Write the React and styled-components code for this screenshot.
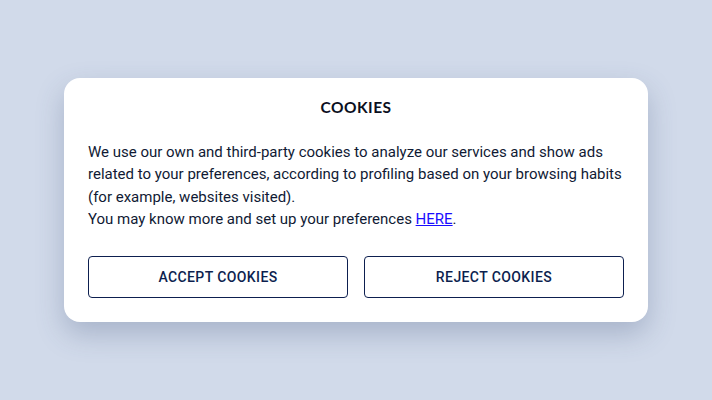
import React from 'react'
import styled, { createGlobalStyle } from 'styled-components'

const GlobalStyle = createGlobalStyle`
  html, body {
    margin: 0;
    padding: 0;
    background: #d1daea;
  }
  body {
    font-family: Roboto, "Liberation Sans", sans-serif;
  }
`

const App = () => {
  return (
    <>
      <GlobalStyle />
      <Page>
        <Card>
          <Title>COOKIES</Title>
          <Text>
            We use our own and third-party cookies to analyze our services and show ads
            related to your preferences, according to profiling based on your browsing habits
            (for example, websites visited).
            <br />
            You may know more and set up your preferences <Link href="#">HERE</Link>.
          </Text>
          <Actions>
            <Button>ACCEPT COOKIES</Button>
            <Button>REJECT COOKIES</Button>
          </Actions>
        </Card>
      </Page>
    </>
  )
}

export default App

const Page = styled.div`
  width: 712px;
  height: 400px;
  display: flex;
  align-items: center;
  justify-content: center;
`;

const Card = styled.div`
  width: 584px;
  box-sizing: border-box;
  padding: 20px 24px 24px;
  background-color: white;
  border-radius: 16px;
  box-shadow: 0 12px 28px rgba(60, 80, 120, 0.28);
  display: flex;
  flex-direction: column;
`;

const Title = styled.h2`
  margin: 0;
  font-family: Lato, "Noto Sans", sans-serif;
  font-size: 15.5px;
  line-height: 18px;
  font-weight: 700;
  letter-spacing: 0.5px;
  text-align: center;
  color: #0b0f1e;
`;

const Text = styled.p`
  margin: 25px 0 0;
  font-size: 15px;
  line-height: 22.3px;
  color: #101a34;
`;

const Link = styled.a`
  color: #1a0dff;
  text-decoration: underline;
`;

const Actions = styled.div`
  display: flex;
  gap: 16px;
  margin-top: 26px;
`;

const Button = styled.button`
  flex: 1;
  height: 42px;
  background: white;
  border: 1px solid #0d1f4f;
  border-radius: 4px;
  font-family: Roboto, "Liberation Sans", sans-serif;
  font-size: 14px;
  font-weight: 500;
  letter-spacing: 0.4px;
  color: #0d1f4f;
  cursor: pointer;
`;
